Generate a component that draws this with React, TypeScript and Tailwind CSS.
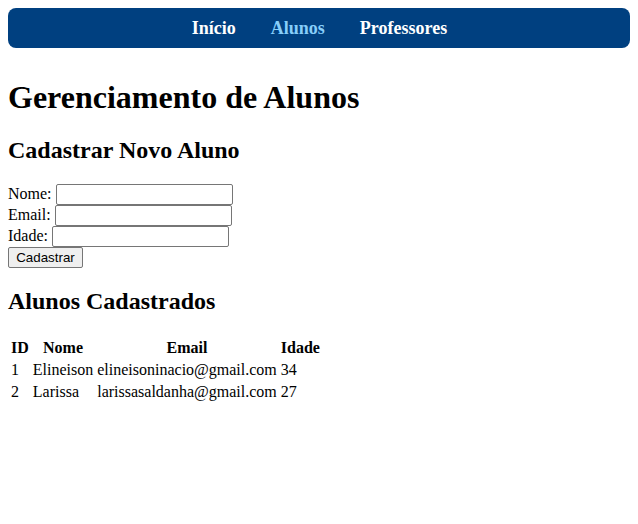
const alunos = [
  { id: 1, nome: "Elineison", email: "elineisoninacio@gmail.com", idade: 34 },
  { id: 2, nome: "Larissa", email: "larissasaldanha@gmail.com", idade: 27 },
];

function Navbar() {
  return (
    <nav className="flex h-10 items-center justify-center gap-[35px] rounded-lg bg-[#004080] pl-[1px] text-[18px] font-bold">
      <a href="#" className="text-white">
        Início
      </a>
      <a href="#" className="text-[#87cefa]">
        Alunos
      </a>
      <a href="#" className="text-white">
        Professores
      </a>
    </nav>
  );
}

export default function App() {
  const inputClass =
    "h-[21px] w-[177px] rounded-[2px] border border-[#767676] bg-white px-[3px] align-baseline font-['Liberation_Sans',Arial,sans-serif] text-[13.33px]";

  return (
    <div className="min-h-[524px] bg-white p-2 font-['Liberation_Serif','Times_New_Roman',serif] text-[16px] leading-[normal] text-black">
      <Navbar />

      <h1 className="mb-[21.44px] mt-[31px] text-[32px] font-bold">
        Gerenciamento de Alunos
      </h1>

      <h2 className="my-[20px] text-[24px] font-bold">Cadastrar Novo Aluno</h2>

      {/* form */}
      <form onSubmit={(e) => e.preventDefault()}>
        <label>
          Nome: <input type="text" className={inputClass} />
        </label>
        <br />
        <label>
          Email: <input type="email" className={inputClass} />
        </label>
        <br />
        <label>
          Idade: <input type="number" className={inputClass} />
        </label>
        <br />
        <button
          type="submit"
          className="h-[21px] w-[75px] rounded-[2px] border border-[#767676] bg-[#efefef] font-['Liberation_Sans',Arial,sans-serif] text-[13.33px]"
        >
          Cadastrar
        </button>
      </form>

      <h2 className="mb-[21px] mt-[20px] text-[24px] font-bold">Alunos Cadastrados</h2>

      {/* table */}
      <table className="border-separate border-spacing-[2px]">
        <thead>
          <tr>
            <th className="p-[1px] text-center font-bold">ID</th>
            <th className="p-[1px] text-center font-bold">Nome</th>
            <th className="p-[1px] text-center font-bold">Email</th>
            <th className="p-[1px] text-center font-bold">Idade</th>
          </tr>
        </thead>
        <tbody>
          {alunos.map((aluno) => (
            <tr key={aluno.id}>
              <td className="p-[1px]">{aluno.id}</td>
              <td className="p-[1px]">{aluno.nome}</td>
              <td className="p-[1px]">{aluno.email}</td>
              <td className="p-[1px]">{aluno.idade}</td>
            </tr>
          ))}
        </tbody>
      </table>
    </div>
  );
}
